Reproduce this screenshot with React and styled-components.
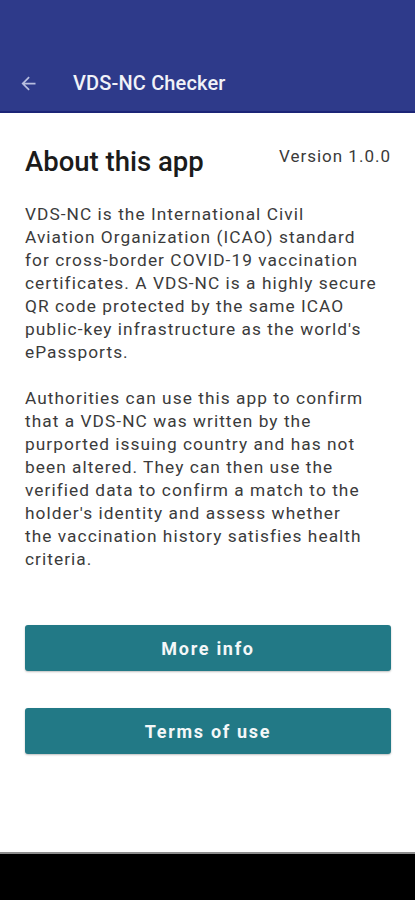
import React from "react";
import styled, { createGlobalStyle } from "styled-components";

const Global = createGlobalStyle`
  html, body { margin: 0; padding: 0; background: #fff; }
  body { font-family: Roboto, "Noto Sans", sans-serif; -webkit-font-smoothing: antialiased; }
  * { box-sizing: border-box; }
`;

const Screen = styled.div`
  display: flex;
  flex-direction: column;
  height: 900px;
  width: 415px;
  overflow: hidden;
`;

const AppBar = styled.header`
  background: #2e3a8a;
  height: 113px;
  border-bottom: 2px solid #1c2577;
  display: flex;
  align-items: flex-end;
`;

const Toolbar = styled.div`
  height: 56px;
  width: 100%;
  display: flex;
  align-items: center;
  padding-left: 18px;
  gap: 34px;
`;

const BackButton = styled.button`
  background: none;
  border: none;
  padding: 0;
  width: 21px;
  height: 21px;
  display: flex;
  color: #b8bedf;
`;

const Title = styled.h1`
  margin: 0;
  font-size: 20px;
  font-weight: 500;
  color: #f1f2f8;
  letter-spacing: 0.15px;
`;

const Content = styled.main`
  flex: 1;
  padding: 29px 24px 0 25px;
  display: flex;
  flex-direction: column;
`;

const HeadRow = styled.div`
  display: flex;
  justify-content: space-between;
  align-items: flex-start;
`;

const Heading = styled.h2`
  margin: 0;
  font-size: 27.5px;
  font-weight: 500;
  color: #1b1b1b;
  line-height: 40px;
`;

const Version = styled.span`
  font-size: 17px;
  color: #3a3a3a;
  letter-spacing: 1px;
  line-height: 26px;
  margin-top: 1px;
`;

const Paragraph = styled.p`
  margin: ${(p) => (p.$first ? "21px" : "23px")} 0 0;
  font-size: 17.3px;
  line-height: 23px;
  letter-spacing: 1.05px;
  color: #3b3b3b;
`;

const Line = styled.span`
  display: block;
  white-space: nowrap;
`;

const Actions = styled.div`
  display: flex;
  flex-direction: column;
  gap: 37px;
  margin-top: 54px;
`;

const ActionButton = styled.button`
  height: 46px;
  width: 100%;
  border: none;
  border-radius: 3px;
  background: #227986;
  color: #f4f7f8;
  font-family: Roboto, sans-serif;
  font-weight: 700;
  font-size: 18px;
  letter-spacing: 1.7px;
  box-shadow: 0 1px 2px rgba(0, 0, 0, 0.25);
`;

const NavBar = styled.footer`
  height: 48px;
  background: #000;
  border-top: 2px solid #8c8c8c;
`;

const para1 = [
  "VDS-NC is the International Civil",
  "Aviation Organization (ICAO) standard",
  "for cross-border COVID-19 vaccination",
  "certificates. A VDS-NC is a highly secure",
  "QR code protected by the same ICAO",
  "public-key infrastructure as the world's",
  "ePassports.",
];

const para2 = [
  "Authorities can use this app to confirm",
  "that a VDS-NC was written by the",
  "purported issuing country and has not",
  "been altered. They can then use the",
  "verified data to confirm a match to the",
  "holder's identity and assess whether",
  "the vaccination history satisfies health",
  "criteria.",
];

export default function App() {
  return (
    <Screen>
      <Global />
      <AppBar>
        <Toolbar>
          <BackButton aria-label="Back">
            <svg width="21" height="21" viewBox="0 0 24 24">
              <path
                d="M20 11H7.83l5.59-5.59L12 4l-8 8 8 8 1.41-1.41L7.83 13H20v-2z"
                fill="currentColor"
              />
            </svg>
          </BackButton>
          <Title>VDS-NC Checker</Title>
        </Toolbar>
      </AppBar>
      <Content>
        <HeadRow>
          <Heading>About this app</Heading>
          <Version>Version 1.0.0</Version>
        </HeadRow>
        <Paragraph $first>
          {para1.map((l) => (
            <Line key={l}>{l}</Line>
          ))}
        </Paragraph>
        <Paragraph>
          {para2.map((l) => (
            <Line key={l}>{l}</Line>
          ))}
        </Paragraph>
        <Actions>
          <ActionButton>More info</ActionButton>
          <ActionButton>Terms of use</ActionButton>
        </Actions>
      </Content>
      <NavBar />
    </Screen>
  );
}
